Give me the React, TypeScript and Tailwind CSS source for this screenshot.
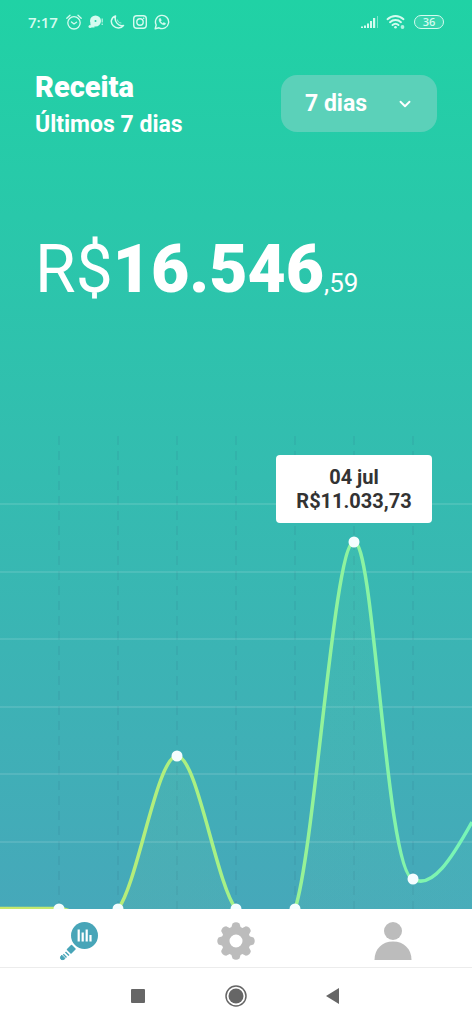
import React from 'react';
import { ChevronDown } from 'lucide-react';

const gridLines = [68, 136, 203, 271, 338, 406];

const points = [
  { x: 59, y: 473 },
  { x: 118, y: 473 },
  { x: 177, y: 320 },
  { x: 236, y: 473 },
  { x: 295, y: 473 },
  { x: 354, y: 106 },
  { x: 413, y: 443 },
];

const curve =
  'M0 472.5 L59 472.5 C79 473 98 499 118 473 C138 447 157 320 177 320 C197 320 216 447 236 473 C256 499 275 534 295 473 C315 412 334 106 354 106 C374 101 386 439 413 443 C432 454 452 422 472 386';

function StatusBar() {
  return (
    <div className="flex h-11 items-center justify-between pl-7 pr-7 text-[#d5fbef]">
      <div className="flex items-center gap-1.5">
        <span className="mr-0.5 font-['Open_Sans',sans-serif] text-[15px] font-semibold leading-5">7:17</span>
        <svg className="h-4 w-4" viewBox="0 0 16 16" fill="none" stroke="currentColor" strokeWidth="1.3" strokeLinecap="round">
          <circle cx="8" cy="8.8" r="6.2" />
          <path d="M.8 4.2 4 1.2M15.2 4.2 12 1.2M5.5 8 8 10l2.5-1.8" />
        </svg>
        <svg className="h-4 w-4" viewBox="0 0 16 16" fill="currentColor">
          <circle cx="7.5" cy="7" r="5.500" />
          <circle cx="2" cy="12.500" r="1.500" />
          <path d="M2.500 9h4v4.500h-4z" />
          <path d="M13.500 4.500H15v4h-1.500zM13.500 9.500H15V11h-1.500z" opacity=".7" />
          <circle cx="7.500" cy="7" r="1" fill="#22cda7" />
        </svg>
        <svg className="h-4 w-4" viewBox="0 0 16 16" fill="none" stroke="currentColor" strokeLinecap="round" strokeLinejoin="round">
          <path d="M5.500 2C1 3.500 0 8.500 3.200 11.800s8 2.700 10.300-.3C8.500 12.500 4 8 5.500 2z" strokeWidth="1.500" />
          <path d="M7.500 6c0 1.500 1.300 3 3.500 3" strokeWidth="1" opacity=".7" />
        </svg>
        <svg className="h-4 w-4" viewBox="0 0 16 16" fill="none" stroke="currentColor" strokeWidth="1.4">
          <rect x="1.700" y="1.700" width="12.600" height="12.600" rx="3" />
          <circle cx="8" cy="8" r="3.200" />
          <circle cx="11.700" cy="4.300" r=".8" fill="currentColor" stroke="none" />
        </svg>
        <svg className="h-4 w-4" viewBox="0 0 16 16" fill="none" stroke="currentColor" strokeWidth="1.400" strokeLinejoin="round">
          <path d="M1.200 14.800 2.200 11A6.600 6.600 0 1 1 5 13.800z" />
          <path d="M5.200 4.700 6.500 4.500l.8 1.800-.8 1c.5 1 1.200 1.700 2.200 2.200l1-1 1.900.9c0 3-7.500.5-6.400-4.700z" fill="currentColor" strokeWidth=".5" />
        </svg>
      </div>
      <div className="flex items-center gap-2">
        <svg className="h-4 w-[18px]" viewBox="0 0 18 16" fill="currentColor">
          <path d="M4 11.500h2V14H4zM7 9.500h2V14H7zM10 7h2v7h-2zM13 4h2.200v10H13zM1 12.500h2V14H1z" />
          <path d="M17 2h1v12h-1z" opacity=".5" />
        </svg>
        <svg className="h-4 w-5" viewBox="0 0 20 16" fill="none" stroke="currentColor" strokeWidth="1.900" strokeLinecap="round">
          <path d="M1.500 5.200a11.500 11.500 0 0 1 16 0M4 8.200a8 8 0 0 1 11 0M6.500 11a4.500 4.500 0 0 1 6 0" />
          <circle cx="9.500" cy="13.300" r="1.300" fill="currentColor" stroke="none" />
          <circle cx="16.500" cy="13" r="1.900" fill="currentColor" stroke="none" opacity=".8" />
        </svg>
        <span className="flex h-[14px] w-[30px] items-center justify-center rounded-full border border-current bg-white/10 font-['Open_Sans',sans-serif] text-[11px] font-semibold leading-3">
          36
        </span>
      </div>
    </div>
  );
}

function RevenueChart() {
  return (
    <div className="relative h-[473px] w-full">
      <svg className="block h-full w-full" viewBox="0 0 472 473" preserveAspectRatio="none" fill="none">
        <defs>
          <linearGradient id="line" gradientUnits="userSpaceOnUse" x1="0" y1="0" x2="472" y2="0">
            <stop offset="0" stopColor="#c9e86a" />
            <stop offset="0.45" stopColor="#a8f184" />
            <stop offset="1" stopColor="#76f5b8" />
          </linearGradient>
          <linearGradient id="area" gradientUnits="userSpaceOnUse" x1="0" y1="0" x2="472" y2="0">
            <stop offset="0" stopColor="#c9e86a" stopOpacity="0.06" />
            <stop offset="1" stopColor="#76f5b8" stopOpacity="0.06" />
          </linearGradient>
        </defs>
        {points.map((p) => (
          <line key={p.x} x1={p.x} x2={p.x} y1="0" y2="473" stroke="#2f6f86" strokeOpacity="0.25" strokeDasharray="9 6" />
        ))}
        {gridLines.map((y) => (
          <line key={y} x1="0" x2="472" y1={y} y2={y} stroke="#ffffff" strokeOpacity="0.15" strokeWidth="1.5" />
        ))}
        <path d={`${curve} V473 H0 Z`} fill="url(#area)" />
        <path d={curve} stroke="url(#line)" strokeWidth="3.5" />
        {points.map((p) => (
          <circle key={p.x} cx={p.x} cy={p.y} r="5.500" fill="#f4fdff" />
        ))}
      </svg>
      <div className="absolute left-3/4 top-[19px] w-[156px] -translate-x-1/2 rounded bg-white py-[10px] text-center text-xl font-bold leading-6 text-[#333]">
        <p>04 jul</p>
        <p>R$11.033,73</p>
      </div>
    </div>
  );
}

function TabBar() {
  return (
    <nav className="grid h-[59px] grid-cols-3 items-center border-b border-[#ececec] bg-white pt-1.5 text-[#bcbcbc]">
      <button type="button" aria-label="Receita" className="flex justify-center">
        <svg className="h-10 w-10" viewBox="0 0 40 40" fill="#48a5b8">
          <circle cx="25.500" cy="14.500" r="13.500" />
          <path d="M19.700 8.500v12M23.700 11.500v9M27.700 8.500v12M31.500 14v6.500" stroke="#fff" strokeWidth="2.200" />
          <path d="M12.500 24.500 16 28 12 32 8.500 28.500z" strokeLinejoin="round" strokeWidth="1.500" stroke="#48a5b8" />
          <path d="M6.500 31 10 34.600M4.300 33.300 7.500 36.600" stroke="#48a5b8" strokeWidth="1.400" />
          <path d="M2.800 34.200 6 37.400C5 38.800 3 38.800 2 38.300 1 37 1.500 35.300 2.800 34.200z" strokeWidth="1" stroke="#48a5b8" />
        </svg>
      </button>
      <button type="button" aria-label="Configurações" className="flex justify-center">
        <svg className="h-10 w-10" viewBox="0 0 40 40">
          <g fill="currentColor">
            {[0, 45, 90, 135, 180, 225, 270, 315].map((angle) => (
              <path key={angle} d="M14.500 9 16.500 2.500Q20 0 23.500 2.500L25.500 9z" transform={`rotate(${angle} 20 20)`} />
            ))}
          </g>
          <circle cx="20" cy="20" r="10.500" fill="none" stroke="currentColor" strokeWidth="8" />
        </svg>
      </button>
      <button type="button" aria-label="Perfil" className="flex justify-center">
        <svg className="h-10 w-10" viewBox="0 0 40 40" fill="currentColor">
          <circle cx="20" cy="10" r="9" />
          <path d="M1.500 39C1.500 28 9 20.500 20 20.500S38.500 28 38.500 39z" />
        </svg>
      </button>
    </nav>
  );
}

function SystemBar() {
  return (
    <div className="flex h-14 items-center justify-center gap-[74px] bg-white text-[#666]">
      <button type="button" aria-label="Recentes">
        <svg className="h-6 w-6" viewBox="0 0 24 24" fill="currentColor">
          <rect x="5" y="5" width="14" height="14" rx="1" />
        </svg>
      </button>
      <button type="button" aria-label="Início">
        <svg className="h-6 w-6" viewBox="0 0 24 24" fill="currentColor">
          <circle cx="12" cy="12" r="7.500" />
          <circle cx="12" cy="12" r="10" fill="none" stroke="currentColor" strokeWidth="1.500" />
        </svg>
      </button>
      <button type="button" aria-label="Voltar">
        <svg className="h-6 w-6" viewBox="0 0 24 24" fill="currentColor">
          <path d="M4 12 17 4v16z" strokeLinejoin="round" />
        </svg>
      </button>
    </div>
  );
}

export default function App() {
  return (
    <div className="flex min-h-screen flex-col bg-white font-[Roboto,sans-serif]">
      <main className="flex flex-1 flex-col bg-[linear-gradient(to_bottom,#20d2a5,#46a8ba)] text-white">
        <StatusBar />
        <header className="flex items-start justify-between pl-[35px] pr-[35px] pt-[31px]">
          <div>
            <h1 className="text-[29px] font-black leading-6">Receita</h1>
            <p className="mt-3 text-[23px] font-bold leading-7">Últimos 7 dias</p>
          </div>
          <div className="relative h-[57px] w-[156px]">
            <select
              aria-label="Período"
              defaultValue="7"
              className="h-full w-full appearance-none rounded-2xl bg-[#5bd1b9] pl-6 pt-0.5 text-[23px] font-bold text-white"
            >
              <option value="7">7 dias</option>
              <option value="15">15 dias</option>
              <option value="30">30 dias</option>
            </select>
            <ChevronDown className="pointer-events-none absolute right-[23px] top-5 h-[18px] w-[18px]" strokeWidth={2.5} />
          </div>
        </header>
        <p className="mt-[92px] flex items-baseline pl-[35px] leading-[78px]">
          <span className="text-[66px] font-normal">R$</span>
          <span className="text-[66px] font-black">16.546</span>
          <span className="text-[26px] font-normal">,59</span>
        </p>
        <div className="mt-auto">
          <RevenueChart />
        </div>
      </main>
      <TabBar />
      <SystemBar />
    </div>
  );
}
